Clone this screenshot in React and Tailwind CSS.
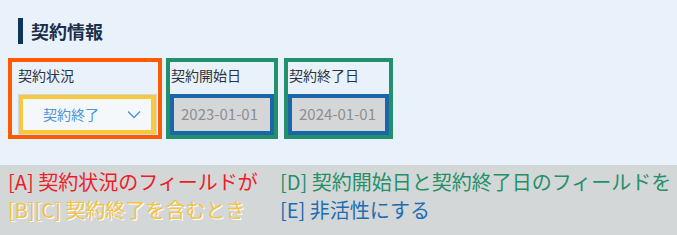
import React from "react";

export default function App() {
  const font = { fontFamily: '"Noto Sans CJK JP", "Noto Sans", sans-serif' };
  return (
    <div className="w-[677px] h-[235px] bg-[#e9f2fb] flex flex-col overflow-hidden" style={font}>
      <div className="h-[165px] pl-[8px] pt-[18px]">
        <div className="flex items-center ml-[10px] h-[26px]">
          <div className="w-[5px] h-[26px] bg-[#0b355f]" />
          <div className="ml-[8px] text-[18px] leading-[26px] font-bold text-[#1b2f4b]">契約情報</div>
        </div>
        <div className="flex mt-[14px]">
          <div className="w-[154px] h-[81px] border-4 border-[#ff5a00] pl-[6px] pr-[1px] pt-[3px] flex flex-col justify-between">
            <div className="text-[14px] leading-[20px] text-[#2b3440]">契約状況</div>
            <div className="h-[41px] border border-[#cfd7df] bg-[#f5f8fb]">
              <div className="h-full border-4 border-r-[5px] border-[#f8c83e] flex items-center pl-[20px] pr-[10px]">
                <span className="text-[14px] text-[#4b93d6] flex-1">契約終了</span>
                <svg width="14" height="9" viewBox="0 0 14 9" fill="none">
                  <path d="M1 1.5 L7 7.5 L13 1.5" stroke="#4b93d6" strokeWidth="1.3" />
                </svg>
              </div>
            </div>
          </div>
          <div className="ml-[4px] w-[112px] h-[81px] border-4 border-[#22906b] pt-[3px] flex flex-col justify-between">
            <div className="pl-[1px] text-[14px] leading-[20px] text-[#2b3440]">契約開始日</div>
            <div className="h-[41px] border-4 border-[#1b66a9] bg-[#d4d6d8] flex items-center pl-[7px]">
              <span className="text-[15px] text-[#8d8f91]">2023-01-01</span>
            </div>
          </div>
          <div className="ml-[6px] w-[109px] h-[81px] border-4 border-[#22906b] pt-[3px] flex flex-col justify-between">
            <div className="pl-[1px] text-[14px] leading-[20px] text-[#2b3440]">契約終了日</div>
            <div className="h-[41px] border-4 border-[#1b66a9] bg-[#d4d6d8] flex items-center pl-[7px]">
              <span className="text-[15px] text-[#8d8f91]">2024-01-01</span>
            </div>
          </div>
        </div>
      </div>
      <div className="flex-1 bg-[#d4d7d8] flex pt-[3px] text-[20px] leading-[28px]">
        <div className="w-[280px] pl-[8px]">
          <div className="text-[#ee1c25] whitespace-nowrap">[A] 契約状況のフィールドが</div>
          <div className="text-[#f6c341] whitespace-nowrap [text-shadow:1px_1px_0_#ffffff]">[B][C] 契約終了を含むとき</div>
        </div>
        <div>
          <div className="text-[#23906a] whitespace-nowrap">[D] 契約開始日と契約終了日のフィールドを</div>
          <div className="text-[#1d6db3] whitespace-nowrap">[E] 非活性にする</div>
        </div>
      </div>
    </div>
  );
}
